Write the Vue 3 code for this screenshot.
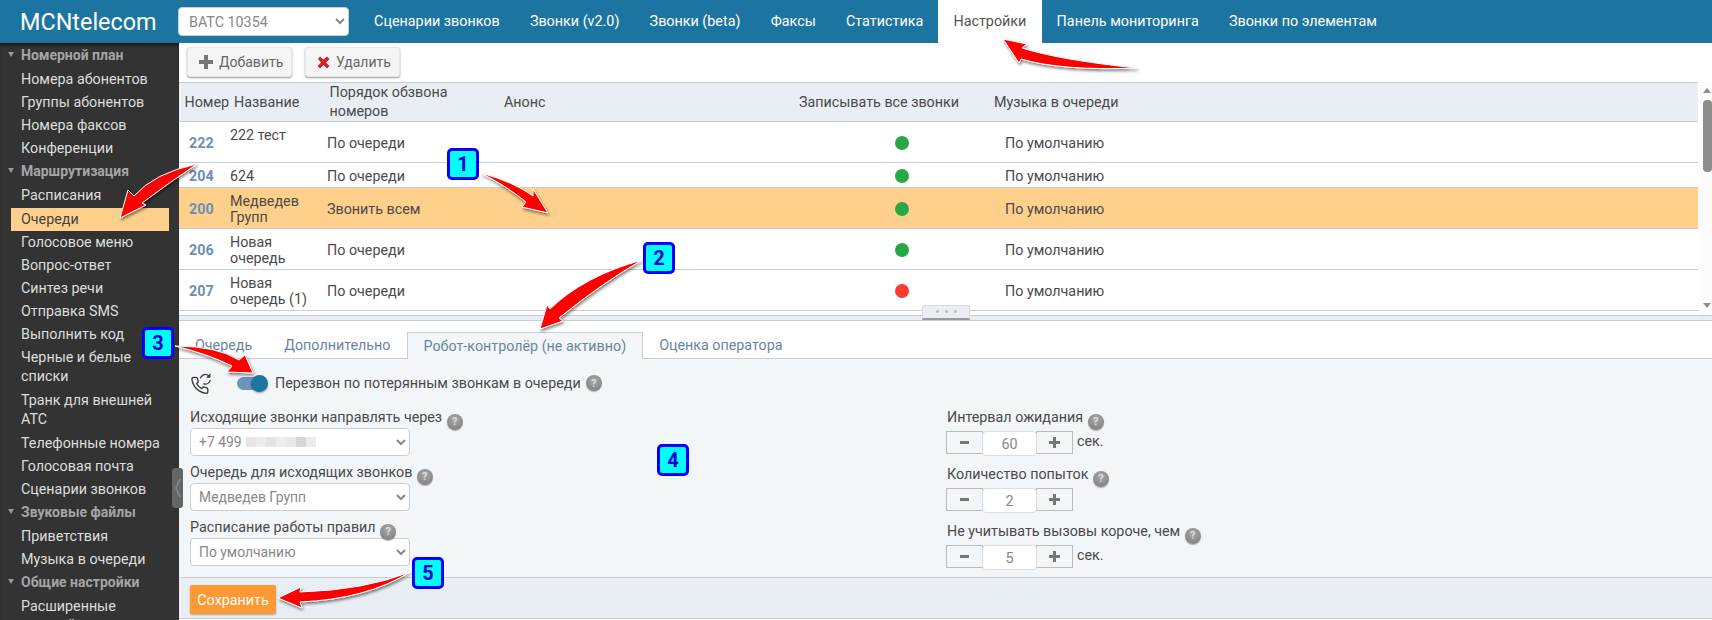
<template>
  <div class="page">
    <header class="topbar">
      <div class="logo">MCNtelecom</div>
      <select class="account">
        <option>ВАТС 10354</option>
      </select>
      <nav class="topnav">
        <a v-for="item in topMenu" :key="item" :class="{ active: item === 'Настройки' }">{{ item }}</a>
      </nav>
    </header>

    <div class="layout">
      <aside class="sidebar">
        <template v-for="group in sideMenu" :key="group.title">
          <div class="side-title"><span class="caret"></span>{{ group.title }}</div>
          <div
            v-for="item in group.items"
            :key="item"
            class="side-item"
            :class="{ current: item === 'Очереди', wrapped: twoLines.includes(item) }"
          >
            {{ item }}
          </div>
        </template>
        <div class="collapse">
          <svg width="6" height="20" viewBox="0 0 6 20"><path d="M5 1 1 10l4 9" fill="none" stroke="#8b8b8b" stroke-width="1.5" /></svg>
        </div>
      </aside>

      <main class="content">
        <div class="toolbar">
          <button class="tool-btn add">
            <svg width="14" height="14" viewBox="0 0 14 14"><path d="M5 0h4v5h5v4H9v5H5V9H0V5h5z" fill="#777" /></svg>
            Добавить
          </button>
          <button class="tool-btn del">
            <svg width="13" height="13" viewBox="0 0 13 13"><path d="M1 3l2-2.500 3.500 3L10 .5l2.500 2.500-3.500 3.500 3.500 3.500L10 12.500l-3.500-3.500L3 12.500.5 10 4 6.500z" fill="#d2232a" /></svg>
            Удалить
          </button>
        </div>

        <div class="table-wrap">
          <div class="table">
            <div class="thead">
              <div>Номер</div>
              <div>Название</div>
              <div class="th-order">Порядок обзвона номеров</div>
              <div>Анонс</div>
              <div>Записывать все звонки</div>
              <div>Музыка в очереди</div>
            </div>
            <div v-for="row in queues" :key="row.num" class="trow" :class="{ selected: row.selected }">
              <div class="num">{{ row.num }}</div>
              <div class="name" :class="{ pad: row.pad }">{{ row.name }}</div>
              <div>{{ row.order }}</div>
              <div></div>
              <div class="dot-cell"><span class="dot" :class="row.rec ? 'on' : 'off'"></span></div>
              <div>По умолчанию</div>
            </div>
          </div>
          <div class="scroll">
            <span class="arr up"></span>
            <span class="thumb"></span>
            <span class="arr down"></span>
          </div>
        </div>

        <div class="splitter">
          <div class="grip"><i></i><i></i><i></i></div>
        </div>

        <div class="tabs">
          <a>Очередь</a>
          <a>Дополнительно</a>
          <a class="active">Робот-контролёр (не активно)</a>
          <a>Оценка оператора</a>
        </div>

        <section class="panel">
          <div class="robot-row">
            <svg class="phone" width="20" height="21" viewBox="0 0 20 21" fill="none" stroke="#3a3a3a" stroke-width="1.3">
              <path
                transform="translate(-0.8 2.800) scale(0.8)"
                stroke-width="1.700"
                d="M22 16.920v3a2 2 0 0 1-2.180 2 19.790 19.790 0 0 1-8.630-3.070 19.500 19.500 0 0 1-6-6 19.790 19.790 0 0 1-3.070-8.670A2 2 0 0 1 4.110 2h3a2 2 0 0 1 2 1.720 12.840 12.840 0 0 0 .7 2.810 2 2 0 0 1-.45 2.110L8.090 9.910a16 16 0 0 0 6 6l1.270-1.270a2 2 0 0 1 2.110-.45 12.840 12.840 0 0 0 2.810.7A2 2 0 0 1 22 16.920z"
              />
              <path d="M9.500 5.500C10 2.500 13.500.5 16.500 2c.7.4 1.300.9 1.700 1.500" />
              <path d="M19 .8v3.400h-3.400" fill="#3a3a3a" stroke-width="1" />
              <path d="M19.300 7c-.5 3-3.800 5-6.800 3.600" />
            </svg>
            <span class="toggle"><span class="knob"></span></span>
            <span>Перезвон по потерянным звонкам в очереди</span>
            <span class="help">?</span>
          </div>

          <div class="columns">
            <div class="col-left">
              <div class="field">
                <label>Исходящие звонки направлять через <span class="help">?</span></label>
                <div class="select-wrap">
                  <select><option>+7 499</option></select>
                  <span class="mask">
                    <i v-for="(shade, i) in maskShades" :key="i" :style="{ background: shade }"></i>
                  </span>
                </div>
              </div>
              <div class="field">
                <label>Очередь для исходящих звонков <span class="help">?</span></label>
                <select><option>Медведев Групп</option></select>
              </div>
              <div class="field">
                <label>Расписание работы правил <span class="help">?</span></label>
                <select><option>По умолчанию</option></select>
              </div>
            </div>

            <div class="col-right">
              <div v-for="f in steppers" :key="f.label" class="field">
                <label>{{ f.label }} <span class="help">?</span></label>
                <div class="stepper-row">
                  <div class="stepper">
                    <button class="step"><span class="minus"></span></button>
                    <input :value="f.value" readonly />
                    <button class="step">
                      <svg width="11" height="11" viewBox="0 0 11 11"><path d="M4 0h3v4h4v3H7v4H4V7H0V4h4z" fill="#777" /></svg>
                    </button>
                  </div>
                  <span v-if="f.unit" class="unit">{{ f.unit }}</span>
                </div>
              </div>
            </div>
          </div>
        </section>

        <footer class="actions">
          <button class="save">Сохранить</button>
        </footer>
      </main>
    </div>

    <!-- annotations drawn on top of the screenshot -->
    <svg class="arrows" width="1712" height="620" viewBox="0 0 1712 620">
      <defs>
        <filter id="soft" x="-20%" y="-20%" width="150%" height="150%">
          <feDropShadow dx="1" dy="2" stdDeviation="1.500" flood-color="#000" flood-opacity="0.5" />
        </filter>
      </defs>
      <g fill="#f00" stroke="#fff" stroke-width="1" stroke-linejoin="round" filter="url(#soft)">
        <path d="M1003 39 1027 44 1022 48Q1060 60 1137 68 1062 71 1021 59L1019 63Z" />
        <path d="M120 218 128 190 134 196Q154 173 197 164 170 182 142 203L146 205Z" />
        <path d="M548 213 522 207 526 202Q508 187 481 173 514 182 533 196L533 189Z" />
        <path d="M540 329 547 305 550 309Q584 276 642 260 602 283 559 318L563 321Z" />
        <path d="M253 373 227 372 232 366Q208 354 175 346 217 346 239 360L245 355Z" />
        <path d="M278 598 301 587 300 592Q365 590 410 572 367 599 300 602L302 608Z" />
      </g>
    </svg>
    <span v-for="b in badges" :key="b.n" class="badge" :style="{ left: b.x + 'px', top: b.y + 'px' }">{{ b.n }}</span>
  </div>
</template>

<script setup>
const topMenu = [
  "Сценарии звонков",
  "Звонки (v2.0)",
  "Звонки (beta)",
  "Факсы",
  "Статистика",
  "Настройки",
  "Панель мониторинга",
  "Звонки по элементам",
];

const sideMenu = [
  {
    title: "Номерной план",
    items: ["Номера абонентов", "Группы абонентов", "Номера факсов", "Конференции"],
  },
  {
    title: "Маршрутизация",
    items: [
      "Расписания",
      "Очереди",
      "Голосовое меню",
      "Вопрос-ответ",
      "Синтез речи",
      "Отправка SMS",
      "Выполнить код",
      "Черные и белые списки",
      "Транк для внешней АТС",
      "Телефонные номера",
      "Голосовая почта",
      "Сценарии звонков",
    ],
  },
  { title: "Звуковые файлы", items: ["Приветствия", "Музыка в очереди"] },
  { title: "Общие настройки", items: ["Расширенные настройки"] },
];

const twoLines = ["Черные и белые списки", "Транк для внешней АТС"];

const queues = [
  { num: 222, name: "222 тест", order: "По очереди", rec: true, pad: true },
  { num: 204, name: "624", order: "По очереди", rec: true },
  { num: 200, name: "Медведев Групп", order: "Звонить всем", rec: true, selected: true },
  { num: 206, name: "Новая очередь", order: "По очереди", rec: true },
  { num: 207, name: "Новая очередь (1)", order: "По очереди", rec: false },
];

const steppers = [
  { label: "Интервал ожидания", value: 60, unit: "сек." },
  { label: "Количество попыток", value: 2 },
  { label: "Не учитывать вызовы короче, чем", value: 5, unit: "сек." },
];

const maskShades = ["#e6e6e6", "#ececec", "#e4e4e4", "#ededed", "#e8e8e8", "#d6d6d6", "#ebebeb"];

const badges = [
  { n: 1, x: 447, y: 148 },
  { n: 2, x: 643, y: 242 },
  { n: 3, x: 142, y: 327 },
  { n: 4, x: 657, y: 444 },
  { n: 5, x: 412, y: 557 },
];
</script>

<style>
html,
body {
  margin: 0;
  overflow: hidden;
}
</style>

<style scoped>
* {
  box-sizing: border-box;
}

.page {
  position: relative;
  width: 1712px;
  height: 620px;
  overflow: hidden;
  background: #fff;
  color: #4a4a4a;
  font-family: Roboto, "Liberation Sans", sans-serif;
  font-size: 14.300px;
}

.topbar {
  display: flex;
  align-items: center;
  height: 43px;
  background: #1c75a0;
}

.logo {
  width: 178px;
  padding-left: 20px;
  color: #fff;
  font-size: 23.400px;
}

.account {
  width: 171px;
  height: 29px;
  padding-left: 6px;
  border: 1px solid #ccc;
  border-radius: 4px;
  background: #fff;
  color: #888;
  font-family: inherit;
  font-size: 14.300px;
}

.topnav {
  display: flex;
  align-self: stretch;
  margin-left: 10px;
  font-size: 14.350px;
}

.topnav a {
  display: flex;
  align-items: center;
  padding: 0 15.100px;
  color: #fff;
}

.topnav a.active {
  background: #fff;
  color: #555;
}

.layout {
  display: flex;
  height: 577px;
}

.sidebar {
  position: relative;
  flex: none;
  width: 179px;
  padding-top: 1px;
  background: #333;
  box-shadow: inset 0 4px 4px -3px #000;
  color: #ddd;
  line-height: 19px;
}

.side-title {
  position: relative;
  height: 24px;
  padding: 2px 0 0 21px;
  color: #a5a5a5;
  font-weight: 700;
  font-size: 14px;
}

.caret {
  position: absolute;
  left: 8px;
  top: 8px;
  border: 3.500px solid transparent;
  border-top: 5px solid #999;
  border-bottom: 0;
}

.side-item {
  padding: 2px 10px 2px 21px;
}

.side-item.wrapped {
  padding-bottom: 3px;
}

.side-item.current {
  margin: 1px 10px 0 11px;
  padding-left: 10px;
  background: #ffd08c;
  color: #444;
}

.collapse {
  position: absolute;
  left: 172px;
  top: 425px;
  display: flex;
  align-items: center;
  justify-content: center;
  width: 11px;
  height: 40px;
  border-radius: 3px;
  background: #666;
}

.content {
  display: flex;
  flex: 1;
  flex-direction: column;
  min-width: 0;
}

.toolbar {
  display: flex;
  flex: none;
  gap: 13px;
  height: 39px;
  padding: 4px 0 0 8px;
}

.tool-btn {
  display: flex;
  align-items: center;
  gap: 6px;
  height: 30px;
  padding: 0 0 0 11px;
  border: 1px solid #e6e6e6;
  border-radius: 3px;
  background: #f5f5f5;
  box-shadow: 0 1px 2px rgba(0, 0, 0, 0.4);
  color: #666;
  font: inherit;
  font-size: 14px;
}

.tool-btn.add {
  width: 105px;
}

.tool-btn.del {
  width: 95px;
}

.table-wrap {
  display: flex;
  flex: none;
  height: 233px;
}

.table {
  width: 1519px;
}

.thead,
.trow {
  display: grid;
  align-items: center;
}

.thead {
  grid-template-columns: 49.500px 95.500px 174.500px 295px 195px 1fr;
  height: 40px;
  padding-left: 5.500px;
  border-top: 1px solid #c8ced4;
  border-bottom: 1px solid #c8ced4;
  background: #e8eef4;
  line-height: 19px;
}

.th-order {
  width: 130px;
}

.trow {
  grid-template-columns: 41px 97px 177px 295px 206px 1fr;
  padding: 5px 0 3px 10px;
  border-bottom: 1px solid #c8ced4;
  line-height: 16px;
}

.trow.selected {
  background: #ffd08c;
}

.num {
  color: #6e8fb5;
  font-weight: 700;
}

.name {
  width: 94px;
}

.name.pad {
  align-self: start;
  height: 32px;
}

.dot-cell {
  display: flex;
  justify-content: center;
}

.dot {
  width: 14px;
  height: 14px;
  border-radius: 50%;
}

.dot.on {
  background: #28a745;
}

.dot.off {
  background: #ff3b30;
}

.scroll {
  position: relative;
  width: 12px;
  margin-left: 2px;
  background: #fcfcfc;
}

.thumb {
  position: absolute;
  left: 3px;
  top: 18px;
  width: 9px;
  height: 72px;
  border-radius: 4px;
  background: #8c8c8c;
}

.arr {
  position: absolute;
  left: 3px;
  border: 4.500px solid transparent;
}

.arr.up {
  top: 6px;
  border-top: 0;
  border-bottom: 5px solid #8c8c8c;
}

.arr.down {
  top: 221px;
  border-bottom: 0;
  border-top: 5px solid #8c8c8c;
}

.splitter {
  position: relative;
  flex: none;
  height: 6px;
  border-top: 1px solid #c8ced4;
  border-bottom: 1px solid #c8ced4;
  background: #e8eef4;
}

.grip {
  position: absolute;
  left: 743px;
  top: -11px;
  display: flex;
  align-items: flex-start;
  justify-content: center;
  gap: 6px;
  width: 48px;
  height: 15px;
  padding-top: 4px;
  border: 1px solid #d5dae0;
  border-bottom: 2px solid #999;
  border-radius: 3px 3px 0 0;
  background: #e8eef4;
}

.grip i {
  width: 3px;
  height: 3px;
  border-radius: 50%;
  background: #bbb;
}

.tabs {
  display: flex;
  flex: none;
  align-items: flex-end;
  height: 37px;
}

.tabs a {
  display: flex;
  align-items: center;
  height: 27px;
  padding: 0 16px;
  color: #6a85a3;
}

.tabs a.active {
  position: relative;
  top: 1px;
  border: 1px solid #c8ced4;
  border-bottom: 0;
  background: #f3f6f9;
}

.panel {
  flex: none;
  height: 219px;
  padding: 12px 0 0 11px;
  border-top: 1px solid #c8ced4;
  background: #f3f6f9;
}

.robot-row {
  display: flex;
  align-items: center;
  height: 24px;
}

.phone {
  flex: none;
  margin-left: 1px;
}

.toggle {
  position: relative;
  flex: none;
  width: 28px;
  height: 13px;
  margin: 0 10px 0 26px;
  border-radius: 7px;
  background: #6b93bd;
}

.knob {
  position: absolute;
  right: -3px;
  top: -2px;
  width: 17px;
  height: 17px;
  border-radius: 50%;
  background: #1c75a0;
  box-shadow: 0 1px 2px rgba(0, 0, 0, 0.4);
}

.help {
  display: inline-flex;
  align-items: center;
  justify-content: center;
  width: 16px;
  height: 16px;
  margin-left: 1px;
  border-radius: 50%;
  background: radial-gradient(circle at 50% 35%, #aaa, #777);
  box-shadow: 0 1px 1px rgba(0, 0, 0, 0.3);
  color: #ddd;
  font-size: 11px;
  font-weight: 700;
  line-height: 1;
  vertical-align: -3px;
}

.robot-row .help {
  margin-left: 5px;
}

.columns {
  display: flex;
  gap: 536px;
  margin-top: 12px;
}

.col-left {
  display: flex;
  flex-direction: column;
  gap: 6px;
  width: 220px;
}

.col-left label {
  display: block;
  height: 21px;
  line-height: 20px;
  white-space: nowrap;
}

.col-left select {
  display: block;
  width: 220px;
  height: 28px;
  padding-left: 4px;
  border: 1px solid #ccc;
  border-radius: 4px;
  background: #fff;
  color: #888;
  font: inherit;
  font-size: 13.900px;
}

.select-wrap {
  position: relative;
}

.mask {
  position: absolute;
  left: 56px;
  top: 9px;
  display: flex;
  width: 70px;
  height: 10px;
}

.mask i {
  flex: 1;
}

.col-right {
  display: flex;
  flex-direction: column;
  gap: 8px;
}

.col-right label {
  display: block;
  height: 24px;
  padding-left: 1px;
  line-height: 20px;
  white-space: nowrap;
}

.stepper-row {
  display: flex;
  align-items: flex-start;
  height: 25px;
}

.stepper {
  display: flex;
  align-items: flex-start;
}

.step {
  display: flex;
  align-items: center;
  justify-content: center;
  width: 37px;
  height: 23px;
  padding: 0;
  border: 1px solid #bbb;
  background: #f3f6f9;
}

.minus {
  width: 9px;
  height: 3px;
  background: #777;
}

.stepper input {
  position: relative;
  width: 55px;
  height: 25px;
  margin: 0 -1px;
  border: 1px solid #ddd;
  border-radius: 4px;
  background: #fff;
  color: #888;
  font: inherit;
  text-align: center;
  outline: none;
}

.unit {
  margin-left: 4px;
  line-height: 21px;
}

.actions {
  flex: none;
  height: 42px;
  padding: 7px 0 0 11px;
  border-top: 1px solid #c8ced4;
  border-bottom: 1px solid #c8ced4;
  background: #e8eef4;
}

.save {
  width: 86px;
  height: 29px;
  padding: 0;
  border: 0;
  border-radius: 2px;
  background: #ff9933;
  box-shadow: 0 1px 2px rgba(0, 0, 0, 0.3);
  color: #fff;
  font: inherit;
}

.arrows {
  position: absolute;
  left: 0;
  top: 0;
  pointer-events: none;
}

.badge {
  position: absolute;
  display: flex;
  align-items: center;
  justify-content: center;
  width: 32px;
  height: 32px;
  border: 3px solid #0000ff;
  border-radius: 5px;
  background: #00ffff;
  color: #0000d8;
  font-size: 20px;
  font-weight: 700;
}
</style>
